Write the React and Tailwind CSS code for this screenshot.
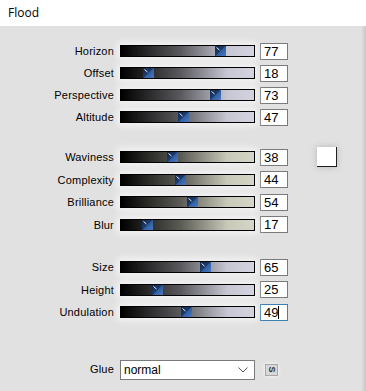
import React from "react";

const G1 = "linear-gradient(to right, #000000 0%, #5a5a5e 45%, #c6c7d3 80%, #d3d4df 100%)";
const G2 = "linear-gradient(to right, #000000 0%, #5c5c56 45%, #c9c9b9 80%, #d6d6c8 100%)";

function Thumb() {
  return (
    <svg width="11" height="10" viewBox="0 0 11 10" className="block">
      <defs>
        <linearGradient id="tg" x1="0" y1="0" x2="1" y2="1">
          <stop offset="0" stopColor="#12284a" />
          <stop offset="0.5" stopColor="#1d3d6e" />
          <stop offset="0.5" stopColor="#2e5c9e" />
          <stop offset="1" stopColor="#4a7cc4" />
        </linearGradient>
      </defs>
      <rect width="11" height="10" fill="url(#tg)" />
      <line x1="1.5" y1="1.5" x2="4.5" y2="4" stroke="#e8eef8" strokeWidth="1" />
    </svg>
  );
}

function Row({ label, value, grad, focused, h }) {
  const left = Math.round((value / 100) * 122);
  return (
    <div className={"flex items-center " + (h === "b" ? "h-[22.5px]" : "h-[22px]")}>
      <div className="w-[114px] text-right text-[11px] text-black tracking-[0.2px]" style={{ fontFamily: '"Liberation Sans", Arial, sans-serif' }}>
        {label}
      </div>
      <div className="ml-[6px] w-[135px] h-[12px] border border-black relative shadow-[0_0_6px_3px_rgba(245,245,245,0.9)]" style={{ background: grad }}>
        <div className="absolute top-0" style={{ left: left + "px" }}>
          <Thumb />
        </div>
      </div>
      <div
        className={
          "ml-[5px] w-[28px] h-[17px] bg-white flex items-center pl-[3px] text-[13px] leading-none text-black " +
          (focused ? "border border-[#3c7fb1]" : "border border-[#7a7a7a]")
        }
        style={{ fontFamily: '"Liberation Sans", Arial, sans-serif' }}
      >
        {value}
        {focused && <span className="inline-block w-[1px] h-[13px] bg-black" />}
      </div>
    </div>
  );
}

export default function App() {
  return (
    <div className="w-[366px] h-[391px] overflow-hidden flex flex-col bg-white">
      <div className="h-[26px] flex items-center pl-[8px] text-[12px] text-black shrink-0" style={{ fontFamily: '"Open Sans", "Noto Sans", sans-serif' }}>
        Flood
      </div>
      <div className="flex-1 flex bg-[#e1e1e1]">
        <div className="flex-1 flex flex-col pt-[14px]">
          <div className="flex flex-col">
            <Row label="Horizon" value={77} grad={G1} />
            <Row label="Offset" value={18} grad={G1} />
            <Row label="Perspective" value={73} grad={G1} />
            <Row label="Altitude" value={47} grad={G1} />
          </div>
          <div className="flex mt-[18px]">
            <div className="flex flex-col">
              <Row label="Waviness" value={38} grad={G2} h="b" />
              <Row label="Complexity" value={44} grad={G2} h="b" />
              <Row label="Brilliance" value={54} grad={G2} h="b" />
              <Row label="Blur" value={17} grad={G2} h="b" />
            </div>
            <div className="ml-[29px] mt-[1px] w-[20px] h-[20px] bg-white border-r border-b border-[#202020] shadow-[0_0_6px_rgba(150,150,150,0.6)]" />
          </div>
          <div className="flex flex-col mt-[20px]">
            <Row label="Size" value={65} grad={G1} h="b" />
            <Row label="Height" value={25} grad={G1} h="b" />
            <Row label="Undulation" value={49} grad={G1} focused h="b" />
          </div>
          <div className="flex items-center mt-[35px] h-[22px]">
            <div className="w-[114px] text-right text-[11px] text-black tracking-[0.2px]" style={{ fontFamily: '"Liberation Sans", Arial, sans-serif' }}>
              Glue
            </div>
            <div className="ml-[6px] w-[135px] h-[20px] bg-white border border-[#7a7a7a] flex items-center justify-between pl-[3px] pr-[6px] text-[12px] text-black" style={{ fontFamily: '"Liberation Sans", Arial, sans-serif' }}>
              <span>normal</span>
              <svg width="10" height="6" viewBox="0 0 10 6">
                <path d="M0.5 0.5 L5 5 L9.5 0.5" fill="none" stroke="#555" strokeWidth="1" />
              </svg>
            </div>
            <div className="ml-[10px] w-[13px] h-[12px] bg-[#d8d8d8] border border-[#a8a8a8] flex items-center justify-center shadow-[0_0_4px_rgba(255,255,255,0.9)]">
              <span className="text-[9px] font-bold leading-none text-[#333] rotate-90 inline-block" style={{ fontFamily: '"Liberation Sans", Arial, sans-serif' }}>S</span>
            </div>
          </div>
        </div>
        <div className="w-[5px] bg-gradient-to-r from-[#e1e1e1] to-[#c8c8c8]" />
      </div>
    </div>
  );
}
